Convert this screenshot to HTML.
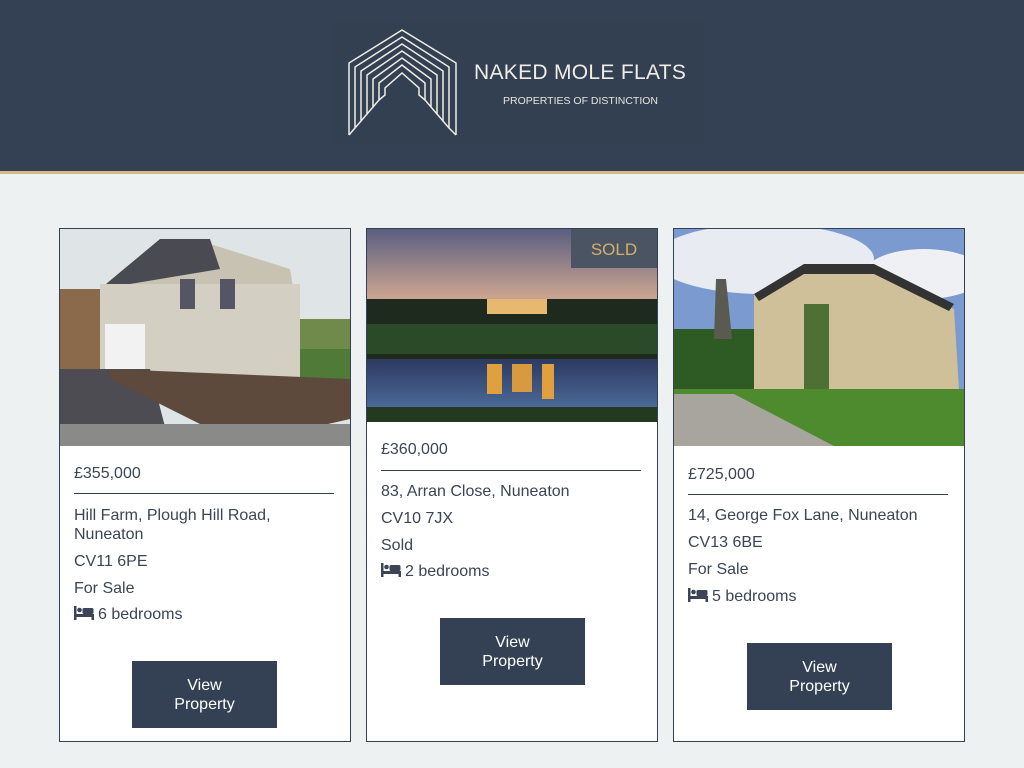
<!DOCTYPE html>
<html><head><meta charset="utf-8"><style>
*{margin:0;padding:0;box-sizing:border-box}
body{width:1024px;height:768px;background:#eef1f2;font-family:"Liberation Sans",sans-serif;color:#3b4555;position:relative;overflow:hidden}
.hdr{position:absolute;left:0;top:0;width:1024px;height:174px;background:#344154;border-bottom:3px solid #d6b98a}
.logobox{position:absolute;left:333px;top:22px;width:370px;height:122px;background:#334052}
.t1{position:absolute;left:474px;top:61px;font-size:21px;color:#f0ede6;letter-spacing:0.3px}
.t2{position:absolute;left:503px;top:95px;font-size:10.5px;color:#e8e4dc}
.card{position:absolute;top:228px;width:292px;height:514px;background:#fff;border:1px solid #344154}
.img{position:absolute;left:0;top:0;width:290px;overflow:hidden}
.tx{position:absolute;left:14px;font-size:16px;line-height:19px;white-space:nowrap}
.hr{position:absolute;left:14px;width:260px;height:1px;background:#344154}
.btn{position:absolute;width:145px;height:67px;background:#344154;color:#fff;font-size:16px;line-height:19px;text-align:center;padding-top:15px}
.bed{display:inline-block;vertical-align:-1px;margin-right:4px}
</style></head><body>
<div class="hdr">
<div class="logobox"></div>
<svg style="position:absolute;left:340px;top:25px" width="125" height="115" viewBox="340 25 125 115" fill="none" stroke="#f0ede6" stroke-width="1.5">
<path d="M349 135 V63 L402 30 L456 63 V135"/>
<path d="M349 135 L355 128 V67 L402 37 L449 67 V128 L456 135"/>
<path d="M355 128 L361 121 V71 L402 44 L443 71 V121 L449 128"/>
<path d="M361 121 L367 114 V75 L402 51 L437 75 V114 L443 121"/>
<path d="M367 114 L373 107 V79 L402 58 L431 79 V107 L437 114"/>
<path d="M373 107 L379 100 V83 L402 65 L425 83 V100 L431 107"/>
<path d="M379 100 L385 95 V88 L402 73 L419 88 V95 L425 100"/>
</svg>
<div class="t1">NAKED MOLE FLATS</div>
<div class="t2">PROPERTIES OF DISTINCTION</div>
</div>

<div class="card" style="left:59px">
<svg class="img" height="217" viewBox="0 0 290 217">
<rect width="290" height="217" fill="#dfe4e6"/>
<rect x="0" y="60" width="60" height="90" fill="#8a6a4a"/>
<rect x="240" y="90" width="50" height="60" fill="#6f8a4a"/>
<polygon points="40,60 90,20 150,15 230,40 240,100 40,100" fill="#c8c2b2"/>
<polygon points="40,60 100,10 150,10 160,40" fill="#4a4a52"/>
<rect x="40" y="55" width="200" height="100" fill="#d3cfc2"/>
<rect x="45" y="95" width="40" height="50" fill="#f2f2f2"/>
<rect x="120" y="50" width="15" height="30" fill="#556"/>
<rect x="160" y="50" width="15" height="30" fill="#556"/>
<rect x="240" y="120" width="50" height="50" fill="#4f7a38"/>
<polygon points="0,140 90,140 110,217 0,217" fill="#4c4c52"/>
<polygon points="50,140 290,150 290,190 180,215 50,150" fill="#5e4a3c"/>
<rect x="0" y="195" width="290" height="22" fill="#8a8a88"/>
</svg>
<div class="tx" style="top:235px">£355,000</div>
<div class="hr" style="top:264px"></div>
<div class="tx" style="top:277px">Hill Farm, Plough Hill Road,<br>Nuneaton</div>
<div class="tx" style="top:323px">CV11 6PE</div>
<div class="tx" style="top:350px">For Sale</div>
<div class="tx" style="top:376px"><svg class="bed" width="20" height="14" viewBox="0 0 20 14"><rect x="0" y="0" width="2.5" height="14" fill="#3b4555"/><circle cx="5.5" cy="4" r="2.3" fill="#3b4555"/><rect x="8.5" y="2" width="11" height="6" rx="1.5" fill="#3b4555"/><rect x="0" y="8" width="20" height="3" fill="#3b4555"/><rect x="17.5" y="8" width="2.5" height="6" fill="#3b4555"/></svg>6 bedrooms</div>
<div class="btn" style="left:72px;top:432px">View<br>Property</div>
</div>

<div class="card" style="left:366px">
<svg class="img" height="193" viewBox="0 0 290 193">
<defs><linearGradient id="sk" x1="0" y1="0" x2="0" y2="1"><stop offset="0" stop-color="#5a5e80"/><stop offset=".35" stop-color="#c9a490"/><stop offset=".6" stop-color="#6a7aa8"/></linearGradient>
<linearGradient id="wt" x1="0" y1="0" x2="0" y2="1"><stop offset="0" stop-color="#2c3a60"/><stop offset="1" stop-color="#4c6a9a"/></linearGradient></defs>
<rect width="290" height="193" fill="url(#sk)"/>
<rect x="0" y="70" width="290" height="60" fill="#1e2a1e"/>
<rect x="0" y="95" width="290" height="30" fill="#2a4a28"/>
<rect x="120" y="70" width="60" height="15" fill="#e6b870"/>
<rect x="0" y="130" width="290" height="50" fill="url(#wt)"/>
<rect x="120" y="135" width="15" height="30" fill="#e0a040"/>
<rect x="145" y="135" width="20" height="28" fill="#d89a40"/>
<rect x="175" y="135" width="12" height="35" fill="#e0a040"/>
<rect x="0" y="178" width="290" height="15" fill="#243a20"/>
<rect x="204" y="0" width="86" height="39" fill="#4a5462"/>
<text x="247" y="26" text-anchor="middle" font-family="Liberation Sans" font-size="17" fill="#d4b06a">SOLD</text>
</svg>
<div class="tx" style="top:211px">£360,000</div>
<div class="hr" style="top:241px"></div>
<div class="tx" style="top:253px">83, Arran Close, Nuneaton</div>
<div class="tx" style="top:280px">CV10 7JX</div>
<div class="tx" style="top:307px">Sold</div>
<div class="tx" style="top:333px"><svg class="bed" width="20" height="14" viewBox="0 0 20 14"><rect x="0" y="0" width="2.5" height="14" fill="#3b4555"/><circle cx="5.5" cy="4" r="2.3" fill="#3b4555"/><rect x="8.5" y="2" width="11" height="6" rx="1.5" fill="#3b4555"/><rect x="0" y="8" width="20" height="3" fill="#3b4555"/><rect x="17.5" y="8" width="2.5" height="6" fill="#3b4555"/></svg>2 bedrooms</div>
<div class="btn" style="left:73px;top:389px">View<br>Property</div>
</div>

<div class="card" style="left:673px">
<svg class="img" height="217" viewBox="0 0 290 217">
<rect width="290" height="217" fill="#7a9ad0"/>
<ellipse cx="90" cy="30" rx="110" ry="35" fill="#e8ecf2"/>
<ellipse cx="250" cy="45" rx="60" ry="25" fill="#eef0f4"/>
<rect x="0" y="100" width="90" height="70" fill="#2e5a24"/>
<polygon points="42,50 52,50 58,110 40,110" fill="#5a5a50"/>
<polygon points="80,65 130,35 210,40 280,80 285,160 80,160" fill="#cfc09a"/>
<polygon points="80,65 130,35 200,35 280,75 275,82 200,45 130,45 85,72" fill="#333"/>
<rect x="130" y="75" width="25" height="95" fill="#4f7034"/>
<rect x="0" y="160" width="290" height="57" fill="#4e8a2e"/>
<polygon points="0,165 60,165 160,217 0,217" fill="#a8a49e"/>
</svg>
<div class="tx" style="top:236px">£725,000</div>
<div class="hr" style="top:265px"></div>
<div class="tx" style="top:277px">14, George Fox Lane, Nuneaton</div>
<div class="tx" style="top:304px">CV13 6BE</div>
<div class="tx" style="top:331px">For Sale</div>
<div class="tx" style="top:358px"><svg class="bed" width="20" height="14" viewBox="0 0 20 14"><rect x="0" y="0" width="2.5" height="14" fill="#3b4555"/><circle cx="5.5" cy="4" r="2.3" fill="#3b4555"/><rect x="8.5" y="2" width="11" height="6" rx="1.5" fill="#3b4555"/><rect x="0" y="8" width="20" height="3" fill="#3b4555"/><rect x="17.5" y="8" width="2.5" height="6" fill="#3b4555"/></svg>5 bedrooms</div>
<div class="btn" style="left:73px;top:414px">View<br>Property</div>
</div>
</body></html>
